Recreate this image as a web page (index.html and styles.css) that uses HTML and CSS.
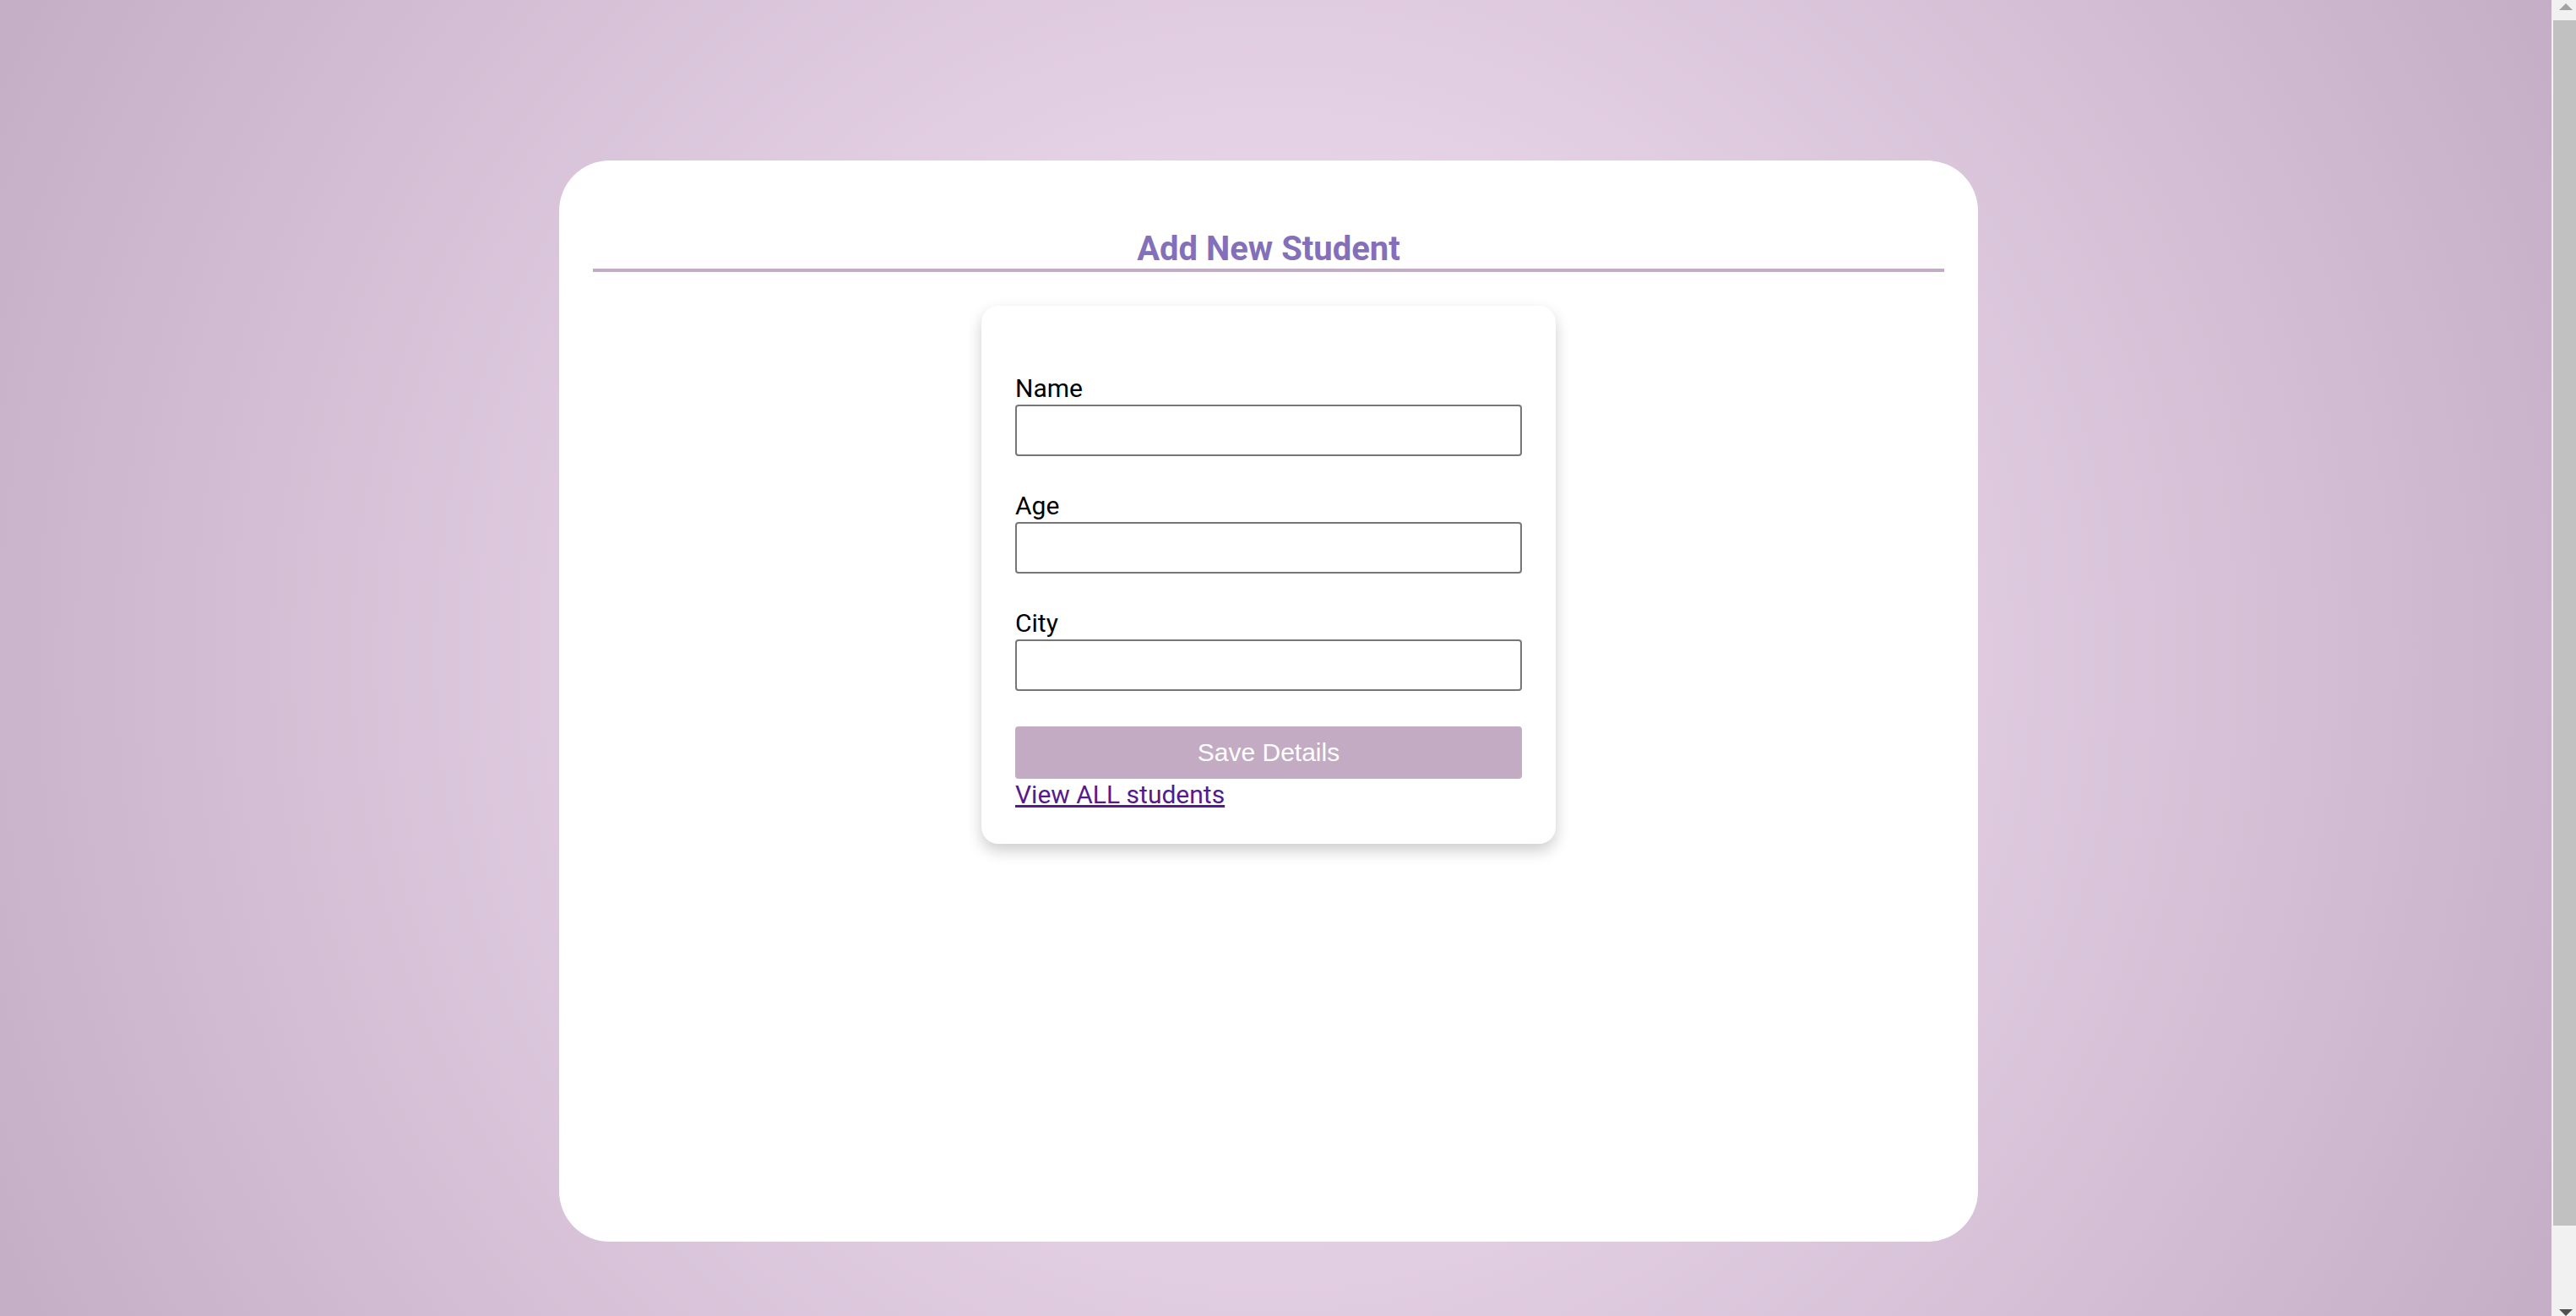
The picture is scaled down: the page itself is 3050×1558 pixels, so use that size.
FILE: index.html
```html
<!DOCTYPE html>
<html lang="en">
<head>
<meta charset="utf-8">
<title>Add New Student</title>
<link rel="stylesheet" href="styles.css">
</head>
<body>
<div class="card">
  <h2 class="title">Add New Student</h2>
  <form class="form-card">
    <div class="field">
      <label class="label" for="name">Name</label>
      <input class="input" id="name" type="text">
    </div>
    <div class="field">
      <label class="label" for="age">Age</label>
      <input class="input" id="age" type="text">
    </div>
    <div class="field">
      <label class="label" for="city">City</label>
      <input class="input" id="city" type="text">
    </div>
    <button class="save" type="button">Save Details</button>
    <div class="link-row"><a class="link" href="#">View ALL students</a></div>
  </form>
</div>
<div class="scrollbar" aria-hidden="true">
  <div class="sb-btn sb-btn-start"><span class="sb-up"></span></div>
  <div class="sb-track"><div class="sb-thumb"></div></div>
  <div class="sb-btn sb-btn-end"><span class="sb-down"></span></div>
</div>
</body>
</html>
```

FILE: styles.css
```css
html {
  min-height: 100%;
  background-color: #c4aec6;
  background-image: radial-gradient(circle 1700px at 1510px 779px, #f8e5f8 0%, #c4aec6 100%);
  background-repeat: no-repeat;
}

body {
  margin: 0;
  font-family: Roboto, "Liberation Sans", sans-serif;
}

.card {
  box-sizing: border-box;
  width: 1680px;
  height: 1280px;
  margin: 190px 0 178px 662px;
  padding: 0 40px;
  background: #ffffff;
  border-radius: 60px;
  overflow: hidden;
  display: flow-root;
}

.title {
  margin: 81px 0 0;
  font-size: 40px;
  font-weight: 700;
  line-height: normal;
  text-align: center;
  color: #8470ba;
  border-bottom: 4px solid #c2abc4;
}

.form-card {
  box-sizing: border-box;
  width: 680px;
  margin: 40px auto 0;
  padding: 39px 40px 39px;
  background: #ffffff;
  border-radius: 20px;
  box-shadow: 0 8px 18px rgba(0, 0, 0, 0.2);
}

.field {
  margin-top: 40px;
}

.label {
  display: block;
  font-size: 30px;
  line-height: 38px;
  color: #000000;
}

.input {
  display: block;
  box-sizing: border-box;
  width: 100%;
  height: 61px;
  margin: 0;
  padding: 4px 10px;
  border: 2px solid #767676;
  border-radius: 4px;
  background: #ffffff;
  font-family: Roboto, sans-serif;
  font-size: 28px;
}

.save {
  display: block;
  box-sizing: border-box;
  width: 100%;
  height: 62px;
  margin: 42px 0 0;
  padding: 0;
  border: none;
  border-radius: 4px;
  background: #c3abc4;
  color: #ffffff;
  font-family: "Liberation Sans", Arial, sans-serif;
  font-size: 30px;
}

.link-row {
  font-size: 30px;
  line-height: 38px;
}

.link {
  color: #551a8b;
  text-decoration: underline;
}

/* imitation of the browser's classic vertical scrollbar */
.scrollbar {
  position: fixed;
  top: 0;
  right: 0;
  width: 29px;
  height: 100vh;
  background: #f1f1f1;
  display: flex;
  flex-direction: column;
}

.sb-btn {
  flex: none;
  height: 24px;
  box-sizing: border-box;
  padding-left: 9px;
}

.sb-btn-start {
  padding-top: 4px;
}

.sb-btn-end {
  padding-top: 16px;
}

.sb-up {
  display: block;
  width: 0;
  height: 0;
  border-left: 8px solid transparent;
  border-right: 8px solid transparent;
  border-bottom: 8px solid #a3a3a3;
}

.sb-down {
  display: block;
  width: 0;
  height: 0;
  border-left: 8px solid transparent;
  border-right: 8px solid transparent;
  border-top: 8px solid #505050;
}

.sb-track {
  flex: 1;
  padding-left: 2px;
}

.sb-thumb {
  height: 1427px;
  background: #c1c1c1;
}
```
